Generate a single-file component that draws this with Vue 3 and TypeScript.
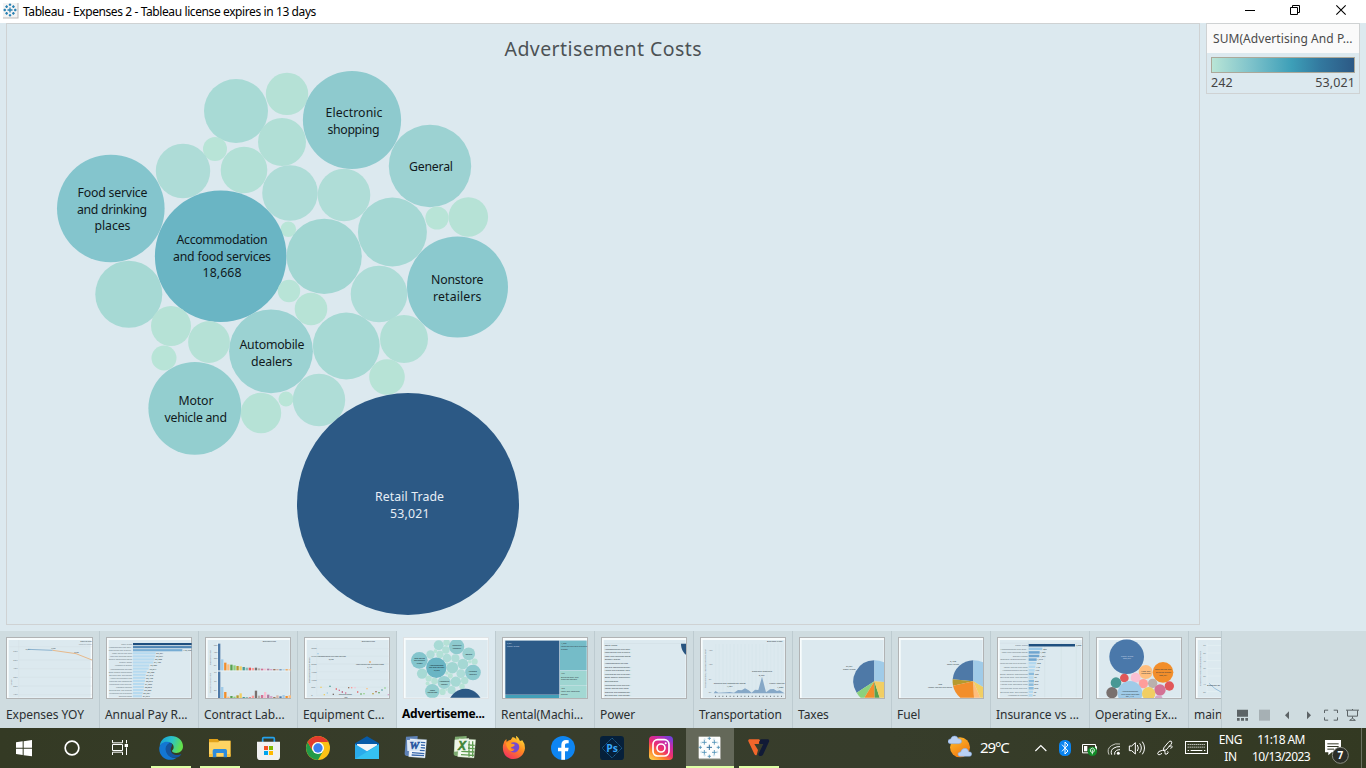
<script setup lang="ts">
interface Bubble { x: number; y: number; r: number; light?: boolean; lines?: [string, number, number, number][] }
interface TinyText { t: string; x: number; y: number; w: number; fill?: string }

const bubbles: Bubble[] = [
  { x: 236, y: 111, r: 32 }, { x: 287, y: 93.9, r: 21.2 },
  { x: 352, y: 120, r: 49.1, lines: [['Electronic', 325.5, 117, 57], ['shopping', 327.5, 134, 52]] },
  { x: 430, y: 166, r: 41.2, lines: [['General', 409, 171, 44]] },
  { x: 282, y: 142, r: 24 }, { x: 215, y: 149, r: 12 }, { x: 183, y: 171, r: 27.2 }, { x: 244, y: 170, r: 23.3 },
  { x: 110.8, y: 208.5, r: 53.8, lines: [['Food service', 77.5, 197, 70], ['and drinking', 77, 214, 70], ['places', 94.5, 230, 36]] },
  { x: 290, y: 193, r: 27.8 }, { x: 344, y: 195, r: 26.3 }, { x: 392.4, y: 232, r: 34.5 }, { x: 437, y: 218, r: 11.6 },
  { x: 288.3, y: 229.3, r: 7.8 },
  { x: 220.7, y: 256.2, r: 65.8, lines: [['Accommodation', 176.5, 244, 91], ['and food services', 173, 261, 98], ['18,668', 202.5, 277, 39]] },
  { x: 324.2, y: 256.3, r: 37.6 }, { x: 468.3, y: 217, r: 19.8 },
  { x: 457.5, y: 287, r: 50.5, lines: [['Nonstore', 431, 284, 52.5], ['retailers', 433, 301, 48.5]] },
  { x: 379, y: 294, r: 28.3 }, { x: 289, y: 291, r: 11.2 }, { x: 311, y: 309, r: 16.3 }, { x: 346.3, y: 346, r: 33.4 },
  { x: 404, y: 339, r: 24 }, { x: 387, y: 377, r: 17.8 }, { x: 128.8, y: 294.3, r: 33.5 }, { x: 171, y: 326, r: 20 },
  { x: 209, y: 342, r: 20.9 }, { x: 164, y: 358, r: 12.5 },
  { x: 271, y: 351.3, r: 41.9, lines: [['Automobile', 239.5, 349, 65], ['dealers', 251, 366, 41.5]] },
  { x: 194.8, y: 408.3, r: 46.4, lines: [['Motor', 178.5, 405, 35], ['vehicle and', 164.5, 422, 62.5]] },
  { x: 261, y: 413, r: 20.2 }, { x: 286, y: 399, r: 7.5 }, { x: 319, y: 400, r: 26.2 },
  { x: 408, y: 504, r: 111, light: true, lines: [['Retail Trade', 375, 501, 69], ['53,021', 390, 518, 39.5]] },
]

const ramp: [number, number, number, number][] = [
  [8, 185, 229, 215], [20, 182, 226, 214], [24, 177, 223, 214], [27.5, 174, 220, 215], [33.5, 166, 217, 212],
  [37.6, 161, 214, 210], [41.5, 156, 210, 210], [46.4, 147, 206, 207], [50, 140, 201, 206], [54, 132, 197, 205],
  [66, 106, 181, 196], [111, 44, 89, 133],
]
function shade(r: number): string {
  let i = ramp.findIndex(s => s[0] >= r)
  if (i <= 0) i = 1
  const a = ramp[i - 1], b = ramp[i]
  const k = Math.max(0, (r - a[0]) / (b[0] - a[0]))
  return `rgb(${[1, 2, 3].map(n => Math.round(a[n] + (b[n] - a[n]) * k)).join(',')})`
}

const sheets = [
  { name: 'Expenses YOY', left: 18 }, { name: 'Annual Pay R...', left: 318 }, { name: 'Contract Lab...', left: 615 },
  { name: 'Equipment C...', left: 24 }, { name: 'Advertiseme...', left: 321 }, { name: 'Rental(Machi...', left: 618 },
  { name: 'Power', left: 27 }, { name: 'Transportation', left: 324 }, { name: 'Taxes', left: 621 },
  { name: 'Fuel', left: 30 }, { name: 'Insurance vs ...', left: 327 }, { name: 'Operating Ex...', left: 18 },
  { name: 'main', left: 315 },
]

const payRows: [string, number, string, number][] = [
  ['Retail Trade', 176, '', 32], ['Accommodation and food...', 176, '', 70], ['Food service and drinking...', 148, '142,778', 70],
  ['Motor vehicle and parts', 68, '59,961', 60], ['Food and beverage stores', 67, '59,574', 66], ['General merchandise stores', 64, '56,908', 70],
  ['Grocery stores', 61, '54,436', 38], ['Automobile dealers', 49, '43,987', 52], ['Accommodation services', 47, '42,044', 66],
  ['Other general merchandise', 41, '36,788', 70], ['Building mat. and garden', 38, '34,312', 68], ['Health and personal care', 37, '33,160', 66],
  ['Clothing and accessories', 36, '32,697', 68], ['Warehouse clubs and sup.', 34, '31,559', 68], ['Nonstore retailers', 33, '30,283', 48],
  ['Building mat. and supplies', 32, '29,385', 68], ['Pharmacies and drug stores', 29, '26,651', 68], ['Clothing stores', 27, '24,977', 40],
]
const insRows: [string, number, string, number][] = [
  ['Retail Trade', 139, '4,290', 37], ['Accommodation and food...', 41, '987', 82], ['Food and beverage stores', 33, '1,081', 78],
  ['Grocery stores', 32, '1,061', 45], ['General merchandise...', 24, '1,247', 82], ['Food service and drinking...', 23, '968', 83],
  ['Motor vehicle and parts', 20, '115', 72], ['Accommodation services', 18, '176', 76], ['Other general merchandise', 16, '768', 83],
  ['Building mat. and garden', 15, '96', 82], ['Pharmacies and drug store', 16, '568', 82], ['Health and personal care', 15, '566', 82],
  ['Warehouse clubs and sup.', 15, '768', 82], ['Building mat. and supplies', 13, '75', 82], ['Automobile dealers', 12, '91', 60],
]
const powerRows = ['Retail Trade', 'Accommodation and food...', 'Food service and drinking...', 'Food and beverage stores', 'Grocery stores',
  'Accommodation services', 'General merchandise stor...', 'Health and personal care...', 'Pharmacies and drug stor...', 'Other general merchandis...',
  'Gas stations', 'Warehouse clubs and sup...', 'Motor vehicle and parts', 'Clothing and accessories...', 'Building mat. and garden...']
const powerW = [38, 80, 80, 78, 46, 70, 80, 80, 80, 80, 40, 80, 72, 80, 80]

const palette = ['#4e79a7', '#a0cbe8', '#f28e2b', '#ffbe7d', '#59a14f', '#8cd17d', '#b6992d', '#f1ce63', '#499894', '#86bcb6', '#e15759', '#ff9d9a', '#79706e', '#bab0ac', '#d37295', '#fabfd2', '#b07aa1', '#d4a6c8', '#9d7660', '#d7b5a6', '#4e79a7', '#a0cbe8', '#f28e2b', '#ffbe7d']
const contractTop = [80, 33, 23, 18, 17, 15, 13, 12, 10, 8, 8, 7, 8, 6, 5, 5, 5, 4, 4, 4, 3, 3, 3, 3]
const contractLow = [79, 33, 18, 4, 6, 4, 8, 14, 3, 3, 2, 7, 22, 7, 9, 18, 10, 6, 3, 8, 5, 9, 6, 8]

const equipDots: [number, number, string][] = [
  [66, 89, '#a0cbe8'], [222, 114, '#f28e2b'], [75, 190, '#f1ce63'], [102, 187, '#499894'], [121, 195, '#e15759'], [94, 207, '#a0cbe8'],
  [85, 212, '#f1ce63'], [112, 211, '#79706e'], [130, 199, '#d37295'], [139, 204, '#b6446a'], [149, 207, '#d37295'], [158, 191, '#9d7660'],
  [167, 191, '#ff9d9a'], [177, 191, '#fabfd2'], [185, 204, '#e15759'], [195, 210, '#59a14f'], [204, 209, '#8cd17d'], [213, 194, '#ffbe7d'],
  [231, 209, '#b6992d'], [240, 203, '#9d5b43'], [249, 206, '#59a14f'], [258, 198, '#499894'], [267, 192, '#8cd17d'], [277, 212, '#d4a6c8'],
]
const opCircles: [number, number, number, string][] = [
  [110, 98, 52, '#4a78aa'], [219, 145, 31, '#f28e2b'], [167, 144, 21, '#ffbe7d'], [103, 162, 13, '#e15759'], [137, 161, 15, '#fabfd2'],
  [78, 176, 16, '#499894'], [160, 179, 14, '#ff9d9a'], [188, 178, 14, '#bab0ac'], [238, 186, 14, '#e15759'], [210, 198, 17, '#d37295'],
  [66, 206, 17, '#79706e'], [120, 208, 37, '#a0cbe8'], [176, 209, 20, '#f1ce63'], [206, 226, 12, '#d4a6c8'],
]

const small: Record<number, TinyText[]> = {
  0: [{ t: 'Retail/Expen', x: 241, y: 54, w: 34 }, { t: 'Measure Names', x: 236, y: 63, w: 39, fill: 'grey' }, { t: '46,514', x: 76, y: 79, w: 14 }, { t: '47,207', x: 153, y: 76, w: 14 }, { t: '45,620', x: 222, y: 87, w: 14 }],
  2: [{ t: 'Business types', x: 788, y: 53, w: 40 }],
  3: [{ t: 'Business types', x: 197, y: 53, w: 40 }, { t: 'Accommodation and food services', x: 62, y: 99, w: 88 }, { t: '2,395', x: 98, y: 107, w: 15 }, { t: 'Food service and drinking places', x: 180, y: 123, w: 84 }, { t: '2,127', x: 214, y: 131, w: 14 }, { t: 'Clothing stores', x: 128, y: 213, w: 40 }, { t: '108', x: 144, y: 221, w: 10 }],
  5: [{ t: '5,891', x: 633, y: 60, w: 15, fill: 'pale' }, { t: 'Retail Trade', x: 633, y: 69, w: 37, fill: 'pale' }, { t: '1,338', x: 795, y: 60, w: 16 }, { t: 'Food service and drinking', x: 795, y: 70, w: 78 }, { t: 'places', x: 795, y: 78, w: 20 }, { t: '476', x: 795, y: 151, w: 11 }, { t: 'Building mat. and', x: 795, y: 161, w: 53 }, { t: 'supplies dealers', x: 795, y: 169, w: 48 }, { t: '453', x: 795, y: 195, w: 11 }, { t: 'Food and beverage', x: 795, y: 205, w: 56 }, { t: 'stores', x: 795, y: 213, w: 20 }],
  7: [{ t: 'Business types', x: 525, y: 55, w: 46 }, { t: 'Clothing and accessories stores', x: 365, y: 180, w: 96 }, { t: '1,704', x: 404, y: 190, w: 18 }, { t: 'Electronic shopping', x: 480, y: 145, w: 60 }, { t: '5,781', x: 500, y: 155, w: 19 }, { t: 'Family clothing', x: 532, y: 181, w: 46 }, { t: '1,206', x: 555, y: 191, w: 19 }],
  8: [{ t: '27,681', x: 762, y: 130, w: 20 }, { t: 'Retail Trade', x: 753, y: 139, w: 38 }],
  9: [{ t: '2,128', x: 186, y: 113, w: 18 }, { t: 'Retail Trade', x: 177, y: 122, w: 36 }, { t: '400', x: 150, y: 182, w: 12 }, { t: 'Motor vehicle and parts', x: 120, y: 191, w: 72 }],
  11: [{ t: 'Retail Trade', x: 93, y: 98, w: 37, fill: 'pale' }, { t: '502,367', x: 99, y: 106, w: 24, fill: 'pale' }, { t: 'Food service and', x: 194, y: 139, w: 50 }, { t: 'drinking places', x: 197, y: 148, w: 46 }, { t: '202,761', x: 208, y: 157, w: 24 }, { t: 'Food and', x: 154, y: 143, w: 27 }, { t: 'beverage', x: 154, y: 151, w: 27 }, { t: 'Accommodation', x: 96, y: 204, w: 48 }, { t: 'and food services', x: 94, y: 212, w: 54 }, { t: '351,119', x: 107, y: 220, w: 24 }],
  12: [{ t: 'Employer', x: 351, y: 187, w: 40 }],
}

const labelled = bubbles.filter(b => b.lines)
const thumbLabelled = labelled.filter(b => !b.light)
const rays = [[0, -27, 5], [0, 27, 5], [-27, 0, 5], [27, 0, 5], [-15, -15, 7], [15, -15, 7], [-15, 15, 7], [15, 15, 7]]
const keys = [0, 1, 2, 3, 4, 5, 6, 7, 8]
</script>

<template>
  <div class="screen">
    <header class="titlebar">
      <svg class="app-icon" width="16" height="16" viewBox="0 0 16 16">
        <rect x="0" y="0" width="15.5" height="15.5" fill="#b9b9b9" /><rect width="14.5" height="14.5" fill="#f3f3f3" />
        <path d="M7 4.5v5M4.5 7h5M7 .5v2.5M5.8 1.7h2.4M7 11v2.5M5.8 12.3h2.4M.5 7H3M1.7 5.8v2.4M11 7h2.5M12.3 5.8v2.4M3.6 2.3v2.6M2.3 3.6h2.6M10.4 2.3v2.6M9.1 3.6h2.6M3.6 9.1v2.6M2.3 10.4h2.6M10.4 9.1v2.6M9.1 10.4h2.6" stroke="#2a82b3" fill="none" stroke-width="1.3" />
      </svg>
      <span class="app-title">Tableau - Expenses 2 - Tableau license expires in 13 days</span>
      <div class="controls">
        <svg width="44" height="23" viewBox="114 0 132 69"><path d="M165 31.5h30" stroke="#000" stroke-width="3" /></svg>
        <svg width="46" height="23" viewBox="246 0 138 69"><path d="M301.500 22.500h21v21h-21zM307.500 22v-5.500h21v21h-5.500" fill="none" stroke="#000" stroke-width="3" /></svg>
        <svg width="48" height="23" viewBox="384 0 144 69"><path d="M439 16l28 28M467 16l-28 28" stroke="#000" stroke-width="3.300" /></svg>
      </div>
    </header>

    <main class="workspace">
      <section class="view">
        <svg width="1192" height="600" viewBox="7 24 1192 600">
          <text class="view-title" x="504.500" y="56" textLength="197">Advertisement Costs</text>
          <circle v-for="(b, i) in bubbles" :key="i" :cx="b.x" :cy="b.y" :r="b.r" :fill="shade(b.r)" />
          <g v-for="(b, i) in labelled" :key="'l' + i" class="bubble-label" :class="{ light: b.light }">
            <text v-for="l in b.lines" :key="l[0]" :x="l[1]" :y="l[2]" :textLength="l[3]">{{ l[0] }}</text>
          </g>
        </svg>
      </section>
      <aside class="legend">
        <div class="legend-head">SUM(Advertising And P...</div>
        <div class="legend-bar"></div>
        <div class="legend-range"><span>242</span><span>53,021</span></div>
      </aside>
    </main>

    <nav class="filmstrip">
      <div class="sheets">
        <div v-for="(s, i) in sheets" :key="s.name" class="sheet" :class="{ active: i === 4 }">
          <svg class="thumb" :width="i ? 86 : 87" height="62" :viewBox="`${s.left} 39 ${i ? 258 : 261} 186`">
            <rect :x="s.left + 1.5" y="40.500" :width="i ? 255 : 258" height="183" fill="#f8fcfd" :stroke="i === 4 ? '#dfe3e5' : '#b1b3b4'" stroke-width="3" />
            <rect :x="s.left + 8" y="48" width="246" height="173" fill="#dce9ef" />
            <g v-if="i === 0">
              <path d="M56 48v173M28 68h248M56 108h220M56 134h220M56 160h220M56 186h220M56 212h220" stroke="#d0dce2" fill="none" />
              <path d="M84 76L158 79" stroke="#8cb3cf" stroke-width="3" fill="none" /><path d="M158 79L228 89L276 108" stroke="#e7b98b" stroke-width="3" fill="none" />
              <g class="tiny faint"><text v-for="n in 6" :key="n" x="40" :y="58 + n * 26" textLength="13">{{ 70 - n * 10 }}K</text><text x="35" y="184" transform="rotate(-90 35 184)">Value</text></g>
            </g>
            <g v-if="i === 1">
              <g v-for="(r, n) in payRows" :key="n">
                <rect x="399" :y="57 + n * 9.200" :width="r[1]" height="6.500" :fill="n === 0 ? '#1e4f7f' : n === 1 ? '#4f86b5' : n === 2 ? '#76acd3' : '#b6daf0'" />
                <text class="tiny" :x="396 - r[3]" :y="63 + n * 9.200" :textLength="r[3]" lengthAdjust="spacingAndGlyphs">{{ r[0] }}</text>
                <text class="tiny strong" :x="r[1] + 401" :y="63 + n * 9.200">{{ r[2] }}</text>
              </g>
            </g>
            <g v-if="i === 2">
              <path d="M653 56v166M653 141h218" stroke="#f2f7f9" stroke-width="2" />
              <rect v-for="(h, n) in contractTop" :key="'t' + n" :x="654 + n * 9.200" :y="139 - h" width="7" :height="h" :fill="palette[n]" />
              <rect v-for="(h, n) in contractLow" :key="'b' + n" :x="654 + n * 9.200" :y="222 - h" width="7" :height="h" :fill="palette[n]" />
              <g class="tiny faint"><text v-for="n in 4" :key="n" x="641" :y="46 + n * 20">{{ 80 - n * 20 }}K</text><text v-for="n in 3" :key="'b' + n" x="642" :y="122 + n * 26">{{ 9 - n * 3 }}K</text><text x="632" y="124" transform="rotate(-90 632 124)">Employer Cost</text><text x="632" y="208" transform="rotate(-90 632 208)">Contract labor Cost</text></g>
            </g>
            <g v-if="i === 3">
              <path d="M62 60v156M62 74h218M62 97h218M62 120h218M62 143h218M62 167h218M62 190h218M62 214h218" stroke="#d2dee3" />
              <rect v-for="(d, n) in equipDots" :key="n" :x="d[0] - 2" :y="d[1] - 2" width="4" height="4" :fill="d[2]" />
              <g class="tiny faint"><text v-for="n in 7" :key="n" x="46" :y="53 + n * 23.300">{{ 3500 - n * 500 }}</text><text x="42" y="178" transform="rotate(-90 42 178)" textLength="78">Expensed Equipment Rental</text></g>
            </g>
            <svg v-if="i === 4" x="329" y="48" width="247" height="173" viewBox="22.600 77 532 373" preserveAspectRatio="none">
              <circle v-for="(b, n) in bubbles" :key="n" :cx="b.x" :cy="b.y" :r="b.r" :fill="shade(b.r)" />
              <g v-for="(b, n) in thumbLabelled" :key="'l' + n"><text v-for="l in b.lines" :key="l[0]" class="thumb-label" :x="l[1]" :y="l[2]" :textLength="l[3]">{{ l[0] }}</text></g>
            </svg>
            <g v-if="i === 5">
              <rect x="628" y="50" width="162" height="162" fill="#2d5b88" /><rect x="628" y="213" width="162" height="9" fill="#43a0b8" />
              <rect x="792" y="50" width="80" height="89" fill="#75bcc8" /><rect x="792" y="141" width="80" height="43" fill="#9ed5d1" /><rect x="792" y="185" width="80" height="37" fill="#a3d8d3" />
            </g>
            <g v-if="i === 6">
              <path d="M37 58.500h245" stroke="#cbd7dd" /><path d="M267 59h15v33c-9-6-15-19-15-33z" fill="#28547f" />
              <text v-for="(r, n) in powerRows" :key="r" class="tiny strong" x="38" :y="66 + n * 10.800" :textLength="powerW[n]" lengthAdjust="spacingAndGlyphs">{{ r }}</text>
            </g>
            <g v-if="i === 7">
              <path v-for="n in 19" :key="n" :d="`M${360 + n * 11} 60v148`" stroke="#d2e0e7" />
              <path d="M365 208L370 201L379 206L404 205L413 204L426 206L438 198L449 199L459 193L470 199L479 206L489 197L499 198L510 158L522 205L534 196L545 195L555 201L563 199L575 206L578 208z" fill="#86a8c7" />
              <g class="tiny faint"><text x="350" y="80">15K</text><text x="350" y="124">10K</text><text x="350" y="167">5K</text><text x="350" y="207">0K</text><text x="343" y="192" transform="rotate(-90 343 192)" textLength="116">Transportation, Shipping, Warehousing</text></g>
              <path d="M369 217h206" stroke="#7b858c" stroke-width="4" stroke-dasharray="3 8" />
            </g>
            <g v-if="i === 8">
              <path d="M847 172V109A63 63 0 0 0 794 206z" fill="#4e79a7" /><path d="M847 172V109q15 0 29 6v59z" fill="#a0cbe8" />
              <path d="M847 172L794 206q6 10 12 15h11z" fill="#8cd17d" /><path d="M847 172L817 221h31z" fill="#f28e2b" /><path d="M847 172L848 221h15z" fill="#59a14f" /><path d="M847 172L863 221h13v-47z" fill="#f1ce63" />
            </g>
            <g v-if="i === 9">
              <path d="M256 172V109A63 63 0 0 0 194 166z" fill="#4e79a7" /><path d="M256 172V109q16 0 29 6v74z" fill="#a0cbe8" />
              <path d="M256 172L194 166q-1 9 1 19z" fill="#b6992d" /><path d="M256 172L195 185q5 22 22 36h41z" fill="#f28e2b" /><path d="M256 172L258 221h19z" fill="#ffbe7d" /><path d="M256 172L277 221h8v-32z" fill="#f1ce63" />
            </g>
            <g v-if="i === 10">
              <path d="M421 50v171M336 57.500h246M470 57v163M520 57v163M565 57v163" stroke="#cbd9df" />
              <g v-for="(r, n) in insRows" :key="n">
                <rect x="422" :y="60 + n * 10.750" :width="r[1]" height="7.500" :fill="n === 0 ? '#1e4f7f' : n > 1 && n < 5 ? '#6fa5cf' : n === 1 ? '#9bc9e8' : n === 8 || n > 9 && n < 13 ? '#8bbbdc' : '#b3d8ef'" />
                <text class="tiny" :x="419 - r[3]" :y="66 + n * 10.750" :textLength="r[3]" lengthAdjust="spacingAndGlyphs">{{ r[0] }}</text>
                <text class="tiny strong" :x="r[1] + 424" :y="66 + n * 10.750">{{ r[2] }}</text>
              </g>
            </g>
            <svg v-if="i === 11" x="26" y="46" width="248" height="176" viewBox="26 46 248 176">
              <circle v-for="(c, n) in opCircles" :key="n" :cx="c[0]" :cy="c[1]" :r="c[2]" :fill="c[3]" />
            </svg>
            <g v-if="i === 12">
              <path d="M351 56v155M351 64h46M351 87h46M351 110h46M351 133h46M351 156h46M351 180h46M351 203h46" stroke="#f4f8fa" />
              <path d="M357 178L374 193L396 206" stroke="#8db7d6" stroke-width="2.500" fill="none" />
              <g class="tiny faint"><text v-for="n in 7" :key="n" x="340" :y="43 + n * 23.300">{{ 7 - n }}K</text><text x="334" y="186" transform="rotate(-90 334 186)" textLength="105">Employer Costs Contribution Plans</text></g>
            </g>
            <text v-for="(t, n) in small[i] || []" :key="'s' + n" class="tiny" :class="t.fill || 'strong'" :x="t.x" :y="t.y" :textLength="t.w" lengthAdjust="spacingAndGlyphs">{{ t.t }}</text>
          </svg>
          <div class="sheet-name">{{ s.name }}</div>
        </div>
      </div>
      <div class="strip-tools">
        <svg width="20" height="12" viewBox="429 256 60 36"><path d="M441 258h33v21h-33zM441 283h8v8h-8zM453 283h9v8h-9zM466 283h8v8h-8z" fill="#5c6366" /></svg>
        <svg width="23" height="12" viewBox="489 256 69 36"><path d="M507 258h33v33h-33z" fill="#a6b0b4" /></svg>
        <svg width="20" height="12" viewBox="558 256 60 36"><path d="M597 263v24l-12-12z" fill="#5c6366" /></svg>
        <svg width="24" height="12" viewBox="618 256 72 36"><path d="M651 263v24l12-12z" fill="#5c6366" /></svg>
        <svg width="22" height="12" viewBox="690 256 66 36"><path d="M703.500 268v-8.500h11M731 259.500h11.500v8.500M742.500 281v8.500H731M714.500 289.500h-11V281" fill="none" stroke="#5c6366" stroke-width="3" /></svg>
        <svg width="24" height="12" viewBox="756 256 72 36"><path d="M768 259.500h39M772.500 260v17.500h30V260M787.500 255v4M787.500 278v6M779 290l8.500-6 8.500 6z" fill="none" stroke="#5c6366" stroke-width="3" /></svg>
      </div>
    </nav>

    <footer class="taskbar">
      <div class="btn"><svg width="24" height="24" viewBox="36 336 72 72"><path d="M48 355l20-3v19H48zM71 351.500l25-3.500v23H71zM48 374h20v19l-20-3zM71 374h25v23l-25-3.500z" fill="#fff" /></svg></div>
      <div class="btn"><svg width="24" height="24" viewBox="180 336 72 72"><circle cx="216" cy="372" r="20.500" fill="none" stroke="#fff" stroke-width="5" /></svg></div>
      <div class="btn"><svg width="24" height="24" viewBox="324 336 72 72"><path d="M337.500 348v8.500h30V348M337.500 393v-8.500h30V393M337.500 361.500h30v18h-30zM379.500 348v10M379.500 370v23" fill="none" stroke="#fff" stroke-width="3" /><path d="M374 360h10v9h-10z" fill="#fff" /></svg></div>
      <div class="btn app first running">
        <svg width="24" height="24" viewBox="477 336 72 72">
          <defs><linearGradient id="edgeTop" x1="0" x2="1" y2=".3"><stop stop-color="#159bd8" /><stop offset=".55" stop-color="#2bc3c9" /><stop offset="1" stop-color="#62e04c" /></linearGradient></defs>
          <path d="M479 365C482 347 496 336 513 336c21 0 36 14 36 31 0 12-8 20-20 20-8 0-14-4-13-7 6-4 7-14 1-20-9-9-27-7-38 5z" fill="url(#edgeTop)" />
          <path d="M478 370c3-15 22-22 36-13-10 0-17 9-15 23 3 14 16 23 30 22-21 15-55-2-51-32z" fill="#1377d2" />
          <path d="M514 357c-13 1-20 12-16 25 4 16 20 23 35 18 5-2 9-6 11-10-14 8-31 1-32-13 0-7 4-10 4-14 0-3-1-5-2-6z" fill="#14559f" />
        </svg>
      </div>
      <div class="btn app running">
        <svg width="24" height="24" viewBox="624 336 72 72"><path d="M627 345h26l4 5h35v47h-65z" fill="#e2a219" /><path d="M627 355h28l4-5h32v48h-64z" fill="#ffd463" /><path d="M638 400v-20q0-5 5-5h33q5 0 5 5v20h-10v-13h-22v13z" fill="#2d8ddd" /><path d="M627 390h11v9h-11zM681 390h10v9h-10z" fill="#f5bf3d" /></svg>
      </div>
      <div class="btn app">
        <svg width="24" height="24" viewBox="771 336 72 72"><path d="M788 355V344q0-3 3-3h29q3 0 3 3v11" fill="none" stroke="#24a2ed" stroke-width="5" /><path d="M771 353h69v45q0 10-10 10h-49q-10 0-10-10z" fill="#f0f0f1" /><path d="M792 366h12v12h-12z" fill="#f25022" /><path d="M807 366h12v12h-12z" fill="#7fba00" /><path d="M792 381h12v12h-12z" fill="#00a4ef" /><path d="M807 381h12v12h-12z" fill="#ffb900" /></svg>
      </div>
      <div class="btn app">
        <svg width="24" height="24" viewBox="30 336 72 72"><circle cx="66" cy="372" r="36" fill="#fbc116" /><path d="M35 354A36 36 0 0 0 66 408l15.600-27L66 372l-15.600 9z" fill="#229a49" /><path d="M34.800 354L50 381A18 18 0 0 1 66 354h31A36 36 0 0 0 34.800 354z" fill="#e33b2e" /><circle cx="66" cy="372" r="18" fill="#fff" /><circle cx="66" cy="372" r="14" fill="#3c7ff0" /></svg>
      </div>
      <div class="btn app">
        <svg width="24" height="24" viewBox="177 336 72 72"><path d="M177 358l36-21 36 21v15h-72z" fill="#075aa8" /><path d="M183 360h60v26h-60z" fill="#f2f4f7" /><path d="M177 360l36 22 36-22v45h-72z" fill="#2aabeb" /><path d="M177 405l72-43v43z" fill="#35c1f1" /></svg>
      </div>
      <div class="btn app">
        <svg width="24" height="24" viewBox="323 336 72 72"><path d="M329 338l35-2-3 62-29-2q-8-1-7-9z" fill="#5e82b7" /><path d="M341 344l50 3-5 55-49-4z" fill="#f2f7fc" stroke="#9db8d9" /><path d="M374 355l13 1M374 363l12 1M373 371l13 1M370 379l15 1M347 386l37 3M346 393l37 2" stroke="#3767ab" stroke-width="4" /><path d="M332 348h43l-6 33h-36z" fill="#dbe7f5" /><text x="354" y="376" class="office">W</text></svg>
      </div>
      <div class="btn app">
        <svg width="24" height="24" viewBox="471 336 72 72"><path d="M477 338l35-2-3 62-29-2q-8-1-7-9z" fill="#7daa70" /><path d="M489 344l50 3-5 55-49-4z" fill="#f4faf0" stroke="#b0cfa4" /><path d="M496 382l39 2M495 392l39 2M519 351v47M530 352v46M516 363l20 1M516 373l20 1" stroke="#5f9d51" stroke-width="4" /><path d="M476 347l43-4-5 36-39 4z" fill="#edf5e8" /><text x="498" y="377" class="office green">X</text></svg>
      </div>
      <div class="btn app">
        <svg width="24" height="24" viewBox="618 336 72 72"><defs><linearGradient id="fox" x1=".8" y1="0" x2=".2" y2="1"><stop stop-color="#ffe43b" /><stop offset=".45" stop-color="#ff8a20" /><stop offset="1" stop-color="#f22b62" /></linearGradient></defs><path d="M621 364l4-12 6-7 1 9q4-5 12-6l6-9q10 2 11 8l-1-12q10 7 12 16l7-2q8 9 8 24c-2 19-16 32-35 32-20 0-34-16-31-41z" fill="url(#fox)" /><path d="M643 358q14-8 24 2 7 12-3 22-10 8-20-1 10 0 12-6-8 0-12-5z" fill="#764ad2" /><path d="M630 357q9-5 17 2 7 0 10 4-4 5-12 7-3 8 9 10-12 3-18-5-6-8-6-18z" fill="#ff9b23" /></svg>
      </div>
      <div class="btn app">
        <svg width="24" height="24" viewBox="765 336 72 72"><circle cx="801" cy="372" r="36" fill="#0e85f2" /><path d="M796 407v-25h-10v-11h10v-8c0-10 6-15 14-15l8 1v9h-4c-5 0-7 2-7 6v7h11l-2 11h-9v25q-6 1-11 0z" fill="#fff" /></svg>
      </div>
      <div class="btn app">
        <svg width="24" height="24" viewBox="24 336 72 72"><rect x="24" y="336" width="72" height="72" rx="10" fill="#06203a" /><path d="M60 342l30 30-30 30-30-30z" fill="none" stroke="#2372ab" stroke-width="2.500" stroke-dasharray="4 2" /><text x="43" y="383" class="ps" textLength="35">Ps</text></svg>
      </div>
      <div class="btn app">
        <svg width="24" height="24" viewBox="171 336 72 72"><defs><linearGradient id="insta" x1=".1" y1="1" x2=".8" y2="0"><stop stop-color="#ffd34e" /><stop offset=".28" stop-color="#fc812b" /><stop offset=".5" stop-color="#ef306d" /><stop offset=".78" stop-color="#c32bae" /><stop offset="1" stop-color="#7540db" /></linearGradient></defs><rect x="171" y="336" width="72" height="72" rx="12" fill="url(#insta)" /><rect x="183" y="347" width="48" height="49" rx="14" fill="none" stroke="#fff" stroke-width="5" /><circle cx="207" cy="372" r="12" fill="none" stroke="#fff" stroke-width="5" /><circle cx="221" cy="358" r="3" fill="#fff" /></svg>
      </div>
      <div class="btn app running current">
        <svg width="24" height="24" viewBox="318 336 72 72"><rect x="321" y="340" width="66" height="66" fill="#a7a8a1" /><rect x="320" y="338" width="64" height="65" fill="#fdfdfd" />
          <g transform="translate(352 370)"><path d="M-8 0H8M0-8V8" stroke="#35709c" stroke-width="3" /><path v-for="(r, n) in rays" :key="n" :d="`M${r[0] - r[2]} ${r[1]}h${r[2] * 2}M${r[0]} ${r[1] - r[2]}v${r[2] * 2}`" stroke="#4b8db4" stroke-width="2.500" /><path d="M-14-28v8M-18-24h8M14-28v8M10-24h8M-14 20v8M-18 24h8M14 20v8M10 24h8M-28-14h8M-24-18v8M20-14h8M24-18v8M-28 14h8M-24 10v8M20 14h8M24 10v8" stroke="#9cc2d8" stroke-width="1" /></g>
        </svg>
      </div>
      <div class="btn app running">
        <svg width="24" height="24" viewBox="465 336 72 72"><path d="M472 346h29q5 2 2 7l-3 7h-13l11 18-4 15q-4 2-7-3l-18-38q-2-5 3-6z" fill="#f2662b" /><path d="M506 346h22q5 2 3 7l-18 39q-4 6-12 3l-2-4 15-31h-9l-4-5z" fill="#111a36" /></svg>
      </div>
      <div class="grow"></div>
      <svg class="weather" width="24" height="24" viewBox="180 334 72 72"><defs><linearGradient id="sun" x2=".6" y2="1"><stop stop-color="#ffbe2e" /><stop offset="1" stop-color="#f07a12" /></linearGradient></defs><circle cx="216" cy="371" r="30" fill="url(#sun)" /><path d="M187 360q-8-1-7-8 1-6 8-6 3-10 13-9 8 1 9 8 9-1 11 7 0 8-9 8zM216 398q-7-1-6-8 1-5 8-5 3-11 13-11 9 1 11 10 9 0 9 7t-8 7z" fill="#b9d0f3" stroke="#7ea4dc" stroke-width="1.500" /></svg>
      <span class="temp">29°C</span>
      <svg width="24" height="40" viewBox="426 312 72 120"><path d="M442 381l16.500-16L475 381" fill="none" stroke="#fff" stroke-width="3.500" /></svg>
      <svg width="22" height="40" viewBox="498 312 66 120"><rect x="513" y="348" width="36" height="48" rx="16" fill="#0a84f0" /><path d="M522 362l18 19-9 9v-36l9 9-18 19" fill="none" stroke="#fff" stroke-width="3" /></svg>
      <svg width="26" height="40" viewBox="564 312 78 120"><path d="M583.500 361.500h39v25h-39z" fill="none" stroke="#fff" stroke-width="3" /><path d="M588 366h10v16h-10zM624 367h3v12h-3z" fill="#fff" /><circle cx="613" cy="382" r="14" fill="#118a27" /><path d="M613 391v-5q-8-2-6-10l6-4 6 4q2 8-6 10M613 377v9" fill="none" stroke="#fff" stroke-width="2.500" /></svg>
      <svg width="24" height="40" viewBox="642 312 72 120"><path d="M663 392q-8-17 7-27 11-8 26-5" fill="none" stroke="#c8cac1" stroke-width="3" /><path d="M671 392q-5-14 7-20 8-5 18-4M680 392q-2-9 6-13 5-2 10-2" fill="none" stroke="#fff" stroke-width="3" /><circle cx="691" cy="388" r="4.500" fill="#fff" /></svg>
      <svg width="24" height="40" viewBox="108 312 72 120"><path d="M118 366h7l11-10v34l-11-10h-7zM142 363q6 9 0 18M149 358q10 14 0 28M157 353q13 19 0 38" fill="none" stroke="#fff" stroke-width="3" /></svg>
      <svg width="28" height="40" viewBox="180 312 84 120"><path d="M216 388q-11 8-13 1 0-8 14-10 10-1 8 6-2 8 6 5 6-3 2-8M221 372l14-17q5-6 9-3 3 4-1 9l-15 17q-4 2-7 0zM236 367q10-3 11 1 0 3-6 5" fill="none" stroke="#fff" stroke-width="3" /></svg>
      <svg width="36" height="40" viewBox="264 312 108 120"><rect x="286.500" y="352.500" width="66" height="36" fill="none" stroke="#fff" stroke-width="3" /><path v-for="k in keys" :key="k" :d="`M${293 + k * 6} 361.500h3M${293 + k * 6} 369.500h3`" stroke="#fff" stroke-width="3" /><path d="M293 379.500h4M302 379.500h35M342 379.500h4" stroke="#fff" stroke-width="3" /></svg>
      <div class="lang"><span>ENG</span><span>IN</span></div>
      <div class="clock"><span>11:18 AM</span><span>10/13/2023</span></div>
      <svg class="notice" width="34" height="40" viewBox="693 312 102 120"><path d="M705 348h48v37h-28l-10 9v-9h-10z" fill="#fff" /><path d="M712 359.500h34M712 367.500h34M712 375.500h20" stroke="#363b2a" stroke-width="3" /><circle cx="751" cy="394" r="24" fill="#2b2e28" stroke="#898c82" stroke-width="3" /><text x="751" y="405" text-anchor="middle" class="count">7</text></svg>
      <i class="peek"></i>
    </footer>
  </div>
</template>

<style>
body { margin: 0; overflow: hidden; }
</style>
<style scoped>
.screen { width: 1366px; height: 768px; display: flex; flex-direction: column; overflow: hidden; background: #dce9ef; font-family: "Noto Sans", "Open Sans", sans-serif; color: #2b2f31; }
svg { display: block; flex: none; }
.titlebar { height: 23px; flex: none; display: flex; background: #fff; }
.app-icon { margin: 3px 0 0 3px; }
.app-title { margin-left: 4px; font: 12px/23px "Noto Sans", sans-serif; color: #000; letter-spacing: -.4px; white-space: nowrap; }
.controls { margin-left: auto; display: flex; }
.workspace { height: 608px; flex: none; display: flex; align-items: flex-start; padding-left: 6px; }
.view { width: 1192px; height: 600px; border: 1px solid #cfd2d3; flex: none; }
.view-title { font-size: 19.5px; font-weight: 400; fill: #4c5255; }
.bubble-label { font-size: 12.3px; fill: #10191c; }
.bubble-label.light { fill: #e7eef5; }
.legend { box-sizing: border-box; width: 154px; height: 71px; margin-left: 6px; border: 1px solid #cfd2d3; }
.legend-head { height: 29px; padding-left: 6px; background: #fafafa; font-size: 12px; letter-spacing: .07px; line-height: 30px; color: #4a4a4a; white-space: nowrap; }
.legend-bar { box-sizing: border-box; width: 144px; height: 16px; margin: 4px 0 0 4px; border: 1px solid #aca899; background: linear-gradient(90deg, #b9e5d6, #7fc3cb 27%, #3d9fb8 56%, #33799f 76%, #2c5985); }
.legend-range { display: flex; justify-content: space-between; padding: 0 4px 0 4px; font-size: 12.5px; letter-spacing: .1px; line-height: 19px; color: #444; }
.filmstrip { height: 97px; flex: none; display: flex; background: #cfdce0; }
.sheets { width: 1221px; flex: none; display: flex; overflow: hidden; }
.sheet { box-sizing: border-box; width: 99px; height: 97px; flex: none; padding: 6px 0 0 6px; border-right: 1px solid #bdcbd0; }
.sheet:first-child { width: 100px; }
.sheet.active { background: #dce9ef; }
.sheet-name { margin-left: -1px; font-size: 12px; letter-spacing: -.05px; line-height: 18px; margin-top: 7px; white-space: nowrap; color: #2b2f31; }
.sheet:first-child .sheet-name { margin-left: 0; }
.sheet.active .sheet-name { font-weight: 700; font-size: 12px; letter-spacing: -.25px; color: #000; margin-top: 6px; }
.tiny { font-size: 6.8px; fill: #66737c; }
.tiny.strong { fill: #2f3b43; }
.tiny.grey { fill: #88929a; }
.tiny.pale { fill: #c3d5e6; }
.tiny.faint text { fill: #6f7b83; }
.thumb-label { font-size: 13px; fill: #142a32; }
.strip-tools { box-sizing: border-box; width: 145px; padding: 78px 0 0 11px; border-left: 1px solid #bdcbd0; display: flex; }
.taskbar { height: 40px; flex: none; display: flex; background: linear-gradient(90deg, #343a24, #383d2c 40%, #373d2b 65%, #333922); color: #fff; }
.btn { box-sizing: border-box; width: 48px; height: 40px; flex: none; display: flex; justify-content: center; padding-top: 8px; }
.btn.app { margin-left: 1px; }
.btn.app.first { margin-left: 3px; }
.btn.running { background: linear-gradient(#deffa6, #deffa6) center bottom / 40px 2px no-repeat; }
.btn.current { background: linear-gradient(#deffa6, #deffa6) center bottom / 48px 2px no-repeat #646859; }
.office { font: italic bold 33px "Liberation Serif", serif; fill: #2353a0; stroke: #2353a0; stroke-width: 1.5px; text-anchor: middle; }
.office.green { font-family: "Liberation Sans", sans-serif; fill: #3d8536; stroke: #3d8536; font-size: 36px; }
.ps { font: bold 31px "Open Sans", sans-serif; fill: #38a9fb; }
.grow { flex: 1; }
.weather { margin-top: 7px; }
.temp { width: 50px; margin-left: 8px; font-size: 15px; line-height: 39px; letter-spacing: -1.1px; white-space: nowrap; }
.lang, .clock { display: flex; flex-direction: column; align-items: center; font-size: 12px; line-height: 17px; padding-top: 3px; white-space: nowrap; }
.lang { width: 33px; letter-spacing: -.3px; }
.clock { width: 68px; letter-spacing: -.6px; }
.notice { margin-left: 6px; }
.count { font: bold 30px "Noto Sans", sans-serif; fill: #fff; }
.peek { width: 1px; margin: 0 4px 0 6px; background: #6b7061; }
</style>
